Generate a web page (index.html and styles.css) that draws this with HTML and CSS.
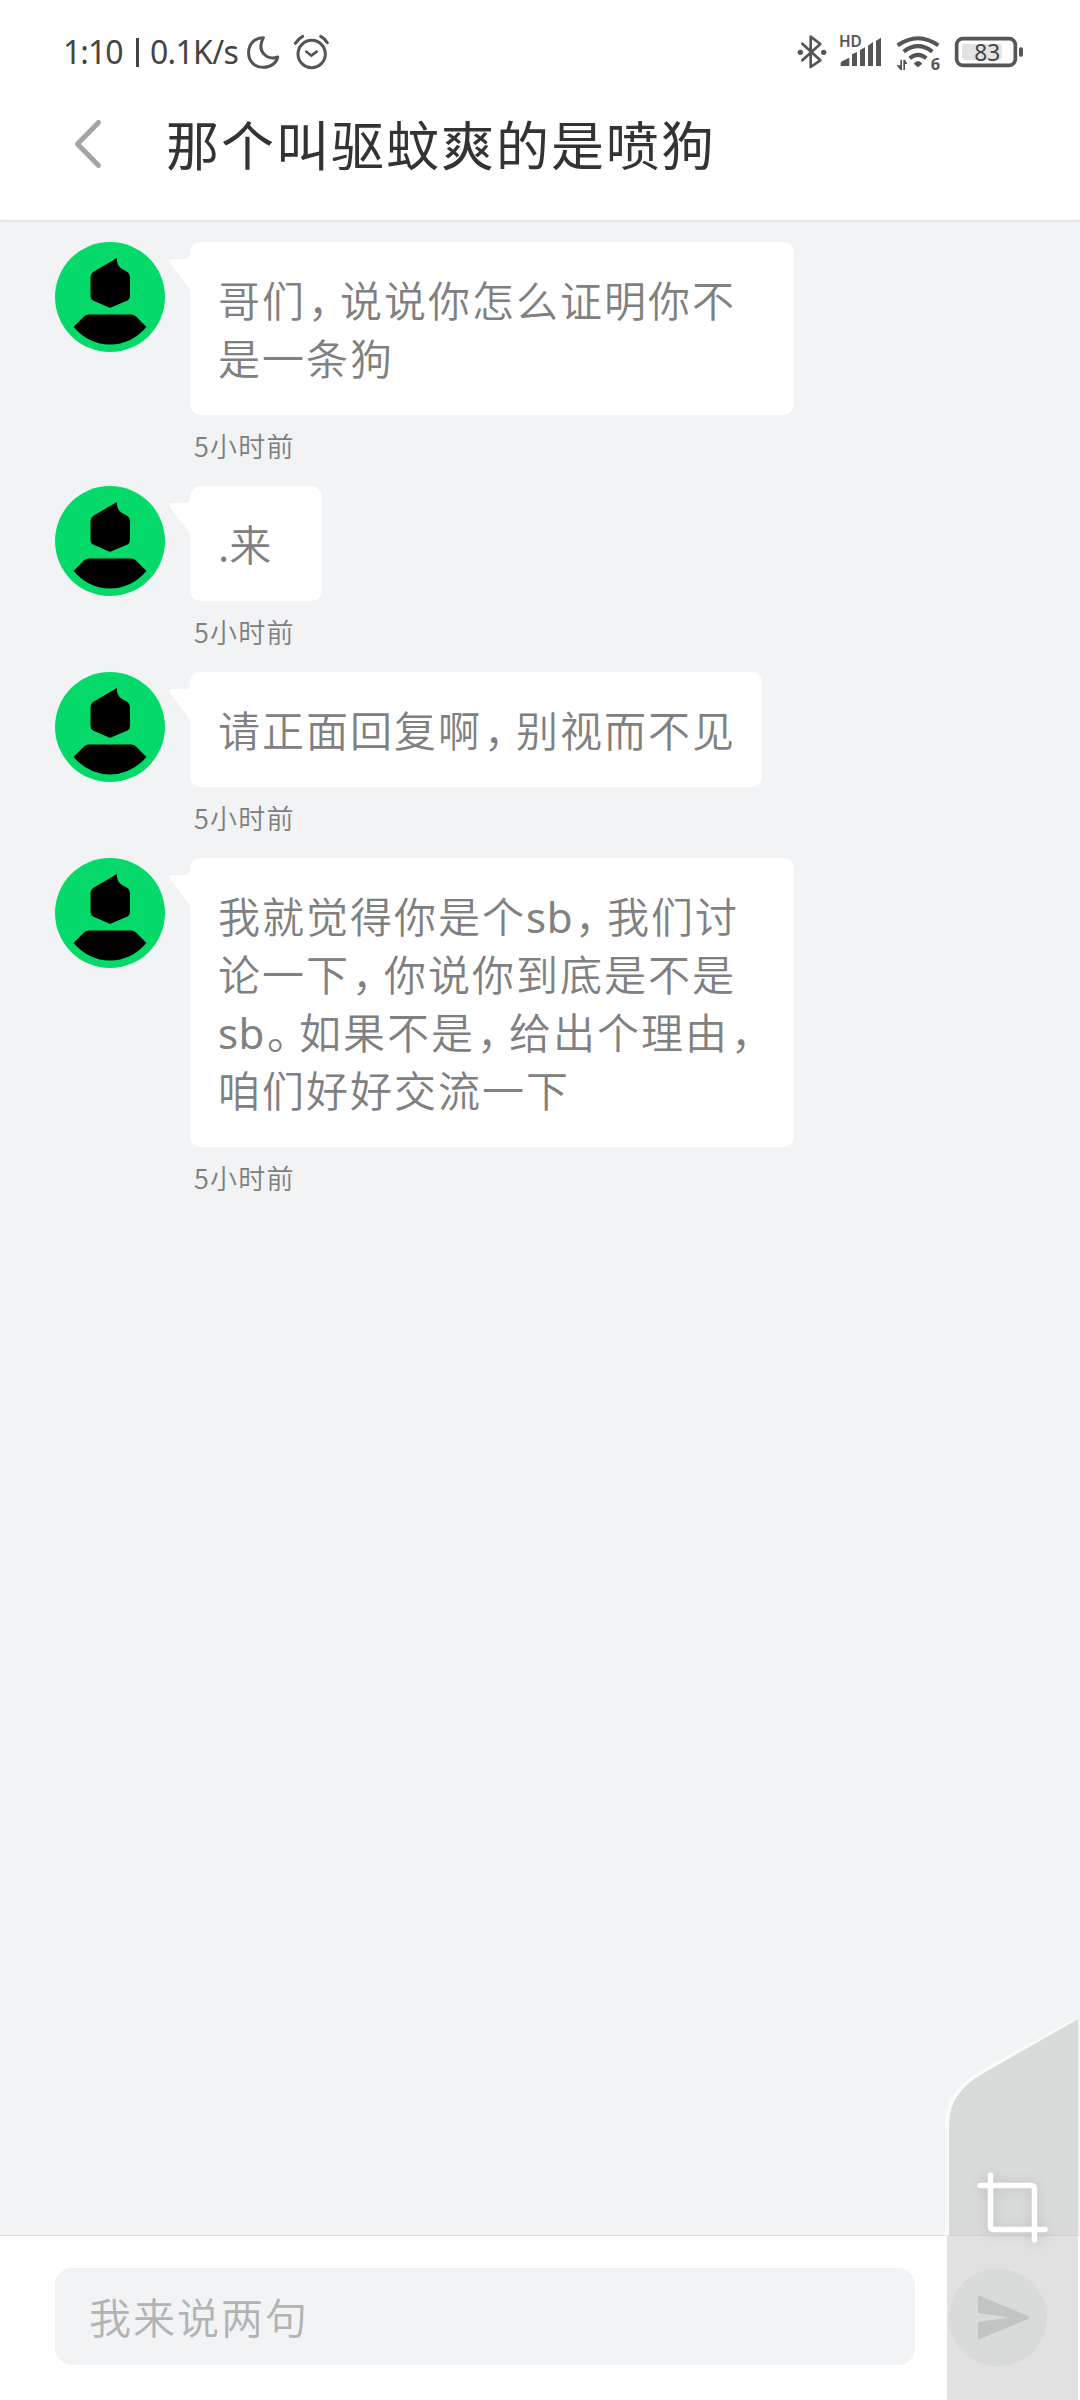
FILE: index.html
```html
<!DOCTYPE html>
<html lang="zh-CN">
<head>
<meta charset="utf-8">
<title>那个叫驱蚊爽的是喷狗</title>
<link rel="stylesheet" href="styles.css">
</head>
<body>
<svg class="defs" width="0" height="0">
  <symbol id="avatar" viewBox="0 0 110 110">
    <circle cx="55" cy="55" r="55" fill="#05d96a"/>
    <path d="M62 16 Q61 23 67 27 L72.500 30 Q75 32 75 35 V54 Q75 57 72.500 58.500 L57 65 Q55 66.500 53 65 L38 58.500 Q35.500 57 35.500 54 V35 Q35.500 32 38 30Z"/>
    <path d="M34 72.500 H76 Q79 72.500 81 74.500 L91.500 85 Q76 102.500 55 102.500 Q34 102.500 18.500 85 L29 74.500 Q31 72.500 34 72.500Z"/>
  </symbol>
  <symbol id="tail" viewBox="0 0 24 40">
    <path d="M24 0 V40 Q22 34 18 29 L3 9.500 Q-1 4.500 4 4 H17 Q21 4 22 0Z" fill="#fff"/>
  </symbol>
</svg>
<div class="screen">
  <div class="status">
    <span class="clock">1:10</span><span class="bar"></span><span class="speed">0.1K/s</span>
    <svg class="moon" viewBox="618 42 104 104" fill="none" stroke="#555" stroke-width="9" stroke-linejoin="round"><path d="M670 50 C612 50 610 139 670 139 C694 139 710 125 713 108 C682 120 648 92 670 50Z"/></svg>
    <svg class="alarm" viewBox="760 42 110 108" fill="none" stroke="#555" stroke-width="9" stroke-linecap="round"><circle cx="816" cy="102" r="41"/><path d="M800 95 L815 107 L831 95" stroke-width="8"/><path d="M767 70 Q776 56 789 49M843 49 Q856 56 863 68" stroke-width="9"/></svg>
    <span class="spacer"></span>
    <svg class="signals" viewBox="0 0 270 70" fill="#555">
      <g transform="scale(.33333)">
        <path d="M67 71 L121 121 L92 141 V50 L121 72 L67 121" fill="none" stroke="#555" stroke-width="8" stroke-linejoin="round" stroke-linecap="round"/>
        <circle cx="61" cy="97" r="8"/><circle cx="131" cy="97" r="8"/>
        <path d="M182 138 V129 Q182 126 186 124 L208 113 V138ZM216 138 V103 L231 96 V138ZM240 138 V90 L255 82 V138ZM264 138 V77 L279 66 V138ZM288 138 V62 L303 53 V138Z"/>
        <path d="M353 76 Q414 33 475 76M371 95 Q414 62 457 95M389 115 Q414 94 439 115" fill="none" stroke="#555" stroke-width="12"/>
        <path d="M401 131 Q414 115 427 131 L414 142ZM361 119 h5 v31 h-5 l-11 -14 h11ZM370 119 h5 l7 13 h-7 v18 h-5Z"/>
        <rect x="530" y="56" width="176" height="80" rx="18" fill="none" stroke="#555" stroke-width="11"/>
        <rect x="546" y="71" width="119" height="49" rx="8" fill="#e3e3e3"/>
        <rect x="717" y="82" width="12" height="28" rx="5"/>
        <text class="hd" x="177" y="81" textLength="68">HD</text>
        <text class="six" x="452" y="150">6</text>
        <text class="level" x="583" y="123" textLength="78">83</text>
      </g>
    </svg>
  </div>
  <header class="header">
    <svg class="back" viewBox="0 0 30 64"><path d="M25.500 10.500 L4.500 32 L25.500 53.500" fill="none" stroke="#a4a4a4" stroke-width="5" stroke-linecap="round" stroke-linejoin="round"/></svg>
    <h1 class="title">那个叫驱蚊爽的是喷狗</h1>
  </header>
  <main class="chat">
    <article class="message">
      <svg class="avatar"><use href="#avatar"/></svg>
      <div class="body">
        <div class="bubble wide"><svg class="tail"><use href="#tail"/></svg>哥们<span class="p">，</span>说说你怎么证明你不<br>是一条狗</div>
        <div class="time">5小时前</div>
      </div>
    </article>
    <article class="message">
      <svg class="avatar"><use href="#avatar"/></svg>
      <div class="body">
        <div class="bubble"><svg class="tail"><use href="#tail"/></svg><span class="dot">.</span>来</div>
        <div class="time">5小时前</div>
      </div>
    </article>
    <article class="message">
      <svg class="avatar"><use href="#avatar"/></svg>
      <div class="body">
        <div class="bubble"><svg class="tail"><use href="#tail"/></svg>请正面回复啊<span class="p">，</span>别视而不见</div>
        <div class="time">5小时前</div>
      </div>
    </article>
    <article class="message">
      <svg class="avatar"><use href="#avatar"/></svg>
      <div class="body">
        <div class="bubble wide"><svg class="tail"><use href="#tail"/></svg>我就觉得你是个<span class="latin">sb</span><span class="p">，</span>我们讨<br>论一下<span class="p">，</span>你说你到底是不是<br><span class="latin">sb</span><span class="p">。</span>如果不是<span class="p">，</span>给出个理由<span class="p">，</span><br>咱们好好交流一下</div>
        <div class="time">5小时前</div>
      </div>
    </article>
  </main>
  <footer class="composer">
    <div class="input">我来说两句</div>
  </footer>
  <svg class="panel" viewBox="940 2010 140 390">
    <path d="M1078 2017 L980 2071 Q945 2091 945 2124 V2235 H950 V2124 L1078 2024Z" fill="#fafbfb"/>
    <path d="M1078 2019 L982 2074 Q949 2093 949 2124 V2236 H1078Z" fill="#d9dbda"/>
    <path d="M947 2236 H1078 V2400 H947Z" fill="#e1e1e1"/>
    <path d="M949 2235.500 H1078" stroke="#cfd0d0"/>
    <circle cx="998" cy="2317.500" r="49" fill="#d9dbda"/>
    <path d="M978 2297 Q978 2295 980 2296 L1028 2316 Q1030 2317.500 1028 2319 L980 2339 Q978 2340 978 2338 V2322 L1009 2317.500 L978 2313Z" fill="#c2c3c3"/>
    <g class="crop"><path d="M990.500 2175 V2226 Q990.500 2229.500 994 2229.500 H1045M980 2185.500 H1031 Q1034.500 2185.500 1034.500 2189 V2240" fill="none" stroke="#fff" stroke-width="5.500" stroke-linecap="round"/></g>
  </svg>
</div>
</body>
</html>
```
FILE: styles.css
```css
* { box-sizing: border-box; }
body { margin: 0; }
.defs { position: absolute; }
.screen {
  position: relative;
  display: flex;
  flex-direction: column;
  width: 1080px;
  height: 2400px;
  overflow: hidden;
  background: #f1f3f5;
  font-family: "Noto Sans CJK SC", sans-serif;
  letter-spacing: 2px;
}
.status {
  display: flex;
  align-items: center;
  height: 104px;
  padding: 0 30px 0 63px;
  background: #fff;
  color: #444;
  font: 32px/44px "Noto Sans", sans-serif;
  letter-spacing: 0;
}
.clock { width: 73px; letter-spacing: -1px; }
.bar { width: 3px; height: 29px; margin-right: 11px; background: #444; }
.speed { width: 96px; letter-spacing: -.7px; }
.moon { width: 34.700px; height: 34.700px; }
.alarm { width: 36.700px; height: 36px; margin-left: 12.600px; }
.spacer { flex: 1; }
.signals { width: 270px; height: 70px; margin-top: 6px; }
.hd { font: 600 46px "Noto Sans", sans-serif; }
.six { font: 700 49px "Noto Sans", sans-serif; }
.level { font: 68px "Noto Sans", sans-serif; fill: #444; }
.header {
  display: flex;
  align-items: center;
  height: 117px;
  padding: 0 0 36px 73px;
  background: #fff;
  border-bottom: 1px solid #dfe1e3;
  box-shadow: 0 1px 2px #e6e8ea;
}
.back { width: 30px; height: 64px; margin-right: 63px; }
.title {
  margin: -2px 0 0;
  color: #333;
  font-size: 53px;
  font-weight: 400;
  line-height: 60px;
}
.chat { flex: 1; padding: 21px 55px 0; }
.message { display: flex; align-items: flex-start; gap: 25px; }
.avatar { width: 110px; height: 110px; }
.bubble {
  position: relative;
  width: fit-content;
  min-width: 132px;
  padding: 28px 26px 29px 28px;
  border-radius: 11px;
  background: #fff;
  color: #808080;
  font-size: 42px;
  font-weight: 350;
  line-height: 58px;
  white-space: nowrap;
}
.wide { width: 604px; }
.tail { position: absolute; left: -22px; top: 13px; width: 24px; height: 40px; }
.p { padding-left: 2px; letter-spacing: -10px; }
.dot { letter-spacing: 0; }
.latin { font-family: "Noto Sans", sans-serif; font-weight: 400; line-height: 0; letter-spacing: .5px; }
.time {
  height: 71px;
  padding: 11px 0 0 4px;
  color: #7e7e7e;
  font-size: 27px;
  font-weight: 350;
  line-height: 40px;
  letter-spacing: 1.200px;
}
.composer {
  height: 165px;
  padding: 32px 165px 0 55px;
  background: #fff;
  border-top: 1px solid #dfe1e3;
}
.input {
  height: 97px;
  padding-left: 34px;
  border-radius: 17px;
  background: #f1f3f5;
  color: #b2b3b4;
  font-size: 42px;
  font-weight: 350;
  line-height: 95px;
}
.panel { position: absolute; left: 940px; top: 2010px; width: 140px; height: 390px; }
.crop { filter: drop-shadow(0 1px 6px rgba(130, 130, 140, .35)); }
```
